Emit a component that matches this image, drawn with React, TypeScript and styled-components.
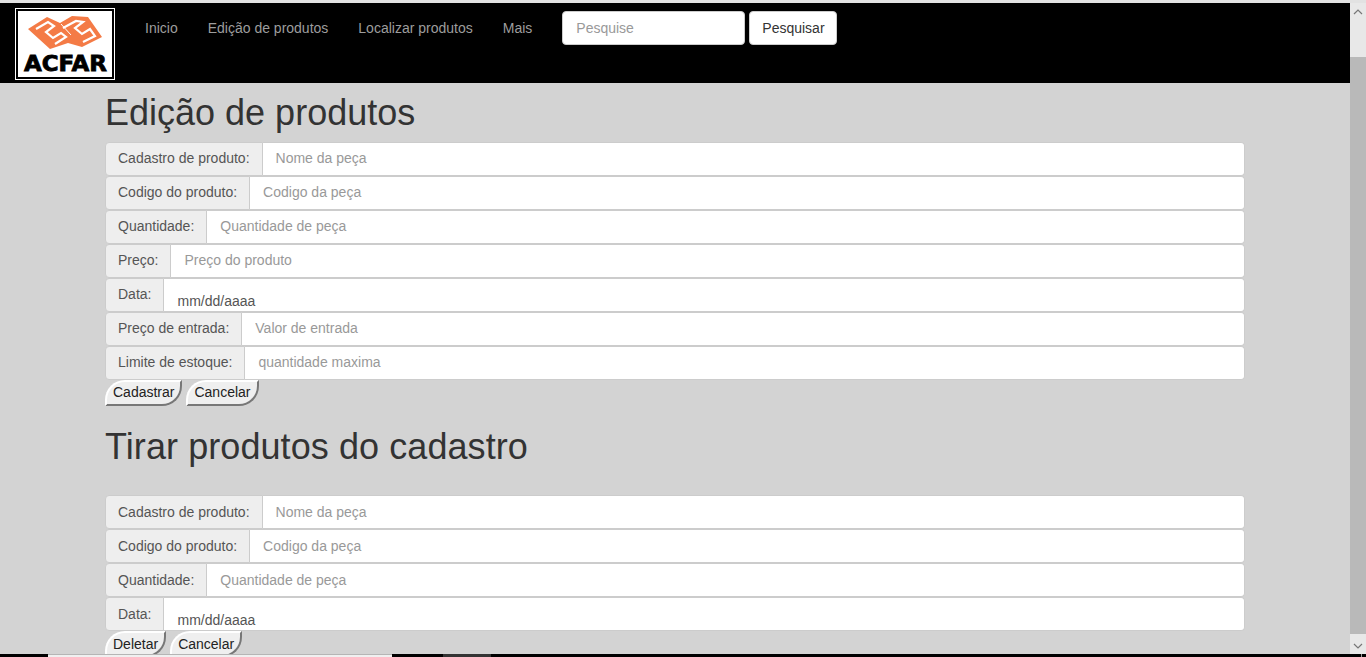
import * as React from "react";
import styled, { createGlobalStyle } from "styled-components";

const GlobalStyle = createGlobalStyle`
  html, body {
    margin: 0;
    height: 100%;
    overflow: hidden;
  }
  body {
    font-family: "Liberation Sans", Arial, sans-serif;
    font-size: 14px;
    line-height: 20px;
    color: #333;
    background: #000;
  }
  * {
    box-sizing: border-box;
  }
`;

interface Field {
  label: string;
  placeholder?: string;
  low?: boolean;
}

const editFields: Field[] = [
  { label: "Cadastro de produto:", placeholder: "Nome da peça" },
  { label: "Codigo do produto:", placeholder: "Codigo da peça" },
  { label: "Quantidade:", placeholder: "Quantidade de peça" },
  { label: "Preço:", placeholder: "Preço do produto" },
  { label: "Data:" },
  { label: "Preço de entrada:", placeholder: "Valor de entrada" },
  { label: "Limite de estoque:", placeholder: "quantidade maxima" },
];

const removeFields: Field[] = [
  { label: "Cadastro de produto:", placeholder: "Nome da peça" },
  { label: "Codigo do produto:", placeholder: "Codigo da peça" },
  { label: "Quantidade:", placeholder: "Quantidade de peça" },
  { label: "Data:" },
];

const navLinks = ["Inicio", "Edição de produtos", "Localizar produtos", "Mais"];

const Logo = () => (
  <LogoBox>
    <svg width="100" height="72" viewBox="0 0 100 72">
      <path d="M13 21 L32 9 L45 15 L57 8 L73 9 L87 29 L67 39 L53 35 L35 41 Z" fill="#f47b46" />
      <g fill="none" stroke="#fff" strokeWidth="2.2">
        <path d="M21 21 L33 14 L39 18 L31 24 L38 30 L46 25 L51 29 L40 36" />
        <path d="M48 20 L61 13 L68 14 L60 20 L67 26 L75 21 L80 28 L68 34" />
      </g>
      <path d="M46 16 L56 27" fill="none" stroke="#fff" strokeWidth="1" />
      <text x="9" y="63" fontFamily="DejaVu Sans" fontWeight="bold" fontSize="21" fill="#000" stroke="#000" strokeWidth="0.8" textLength="83" lengthAdjust="spacingAndGlyphs">
        ACFAR
      </text>
    </svg>
  </LogoBox>
);

const InputRow = ({ label, placeholder, low }: Field) => (
  <Group>
    <Addon $low={low}>{label}</Addon>
    {placeholder ? <TextInput $low={low} placeholder={placeholder} /> : <DateInput>mm/dd/aaaa</DateInput>}
  </Group>
);

const App = () => {
  return (
    <Window>
      <GlobalStyle />
      <TopLine />
      <Viewport>
        <Page>
          <Navbar>
            <Logo />
            <NavList>
              {navLinks.map((link) => (
                <NavLink key={link}>{link}</NavLink>
              ))}
            </NavList>
            <SearchForm>
              <SearchInput placeholder="Pesquise" />
              <SearchButton>Pesquisar</SearchButton>
            </SearchForm>
          </Navbar>
          <Container>
            <FirstTitle>Edição de produtos</FirstTitle>
            {editFields.map((field) => (
              <InputRow key={field.label} {...field} />
            ))}
            <Actions>
              <ActionButton>Cadastrar</ActionButton>
              <ActionButton>Cancelar</ActionButton>
            </Actions>
            <SecondTitle>Tirar produtos do cadastro</SecondTitle>
            {removeFields.map((field) => (
              <InputRow key={field.label} {...field} low />
            ))}
            <Actions>
              <ActionButton $low>Deletar</ActionButton>
              <ActionButton $low>Cancelar</ActionButton>
            </Actions>
          </Container>
        </Page>
        <Scrollbar>
          <ScrollArrow>
            <svg width="10" height="6" viewBox="0 0 10 6">
              <path d="M1 5 L5 1 L9 5" fill="none" stroke="#777" strokeWidth="1.2" />
            </svg>
          </ScrollArrow>
          <ScrollTrack />
          <ScrollArrow>
            <svg width="10" height="6" viewBox="0 0 10 6">
              <path d="M1 1 L5 5 L9 1" fill="none" stroke="#777" strokeWidth="1.2" />
            </svg>
          </ScrollArrow>
        </Scrollbar>
      </Viewport>
      <BottomStrip>
        <Strip $w={48} $c="#000" />
        <LightStrip $w={344} $c="#f0f0f0" />
        <Strip $w={51} $c="#000" />
        <Strip $w={48} $c="#333" />
        <Strip $w={870} $c="#000" />
        <Strip $w={1} $c="#999" />
        <Strip $w={4} $c="#000" />
      </BottomStrip>
    </Window>
  );
};

const Window = styled.div`
  display: flex;
  flex-direction: column;
  height: 657px;
  width: 1366px;
  overflow: hidden;
`;
const TopLine = styled.div`
  height: 3px;
  background: #e2e2e2;
  flex: none;
`;
const Viewport = styled.div`
  display: flex;
  height: 651px;
  flex: none;
`;
const Page = styled.div`
  width: 1350px;
  background: #d3d3d3;
  overflow: hidden;
`;
const Navbar = styled.nav`
  display: flex;
  align-items: flex-start;
  height: 80px;
  background: #000;
`;
const LogoBox = styled.div`
  width: 100px;
  height: 72px;
  margin: 5px 0 0 15px;
  background: #fff;
  outline: 2px solid #000;
  outline-offset: -3px;
  svg {
    display: block;
  }
`;
const NavList = styled.ul`
  display: flex;
  list-style: none;
  margin: 0;
  padding: 0 0 0 15px;
`;
const NavLink = styled.li`
  padding: 15px;
  color: #9d9d9d;
`;
const SearchForm = styled.form`
  display: flex;
  gap: 4px;
  margin: 8px 0 0 15px;
`;
const SearchInput = styled.input`
  width: 183px;
  height: 34px;
  padding: 6px 12px 6px 13px;
  border: 1px solid #ccc;
  border-radius: 4px;
  background: #fff;
  font: inherit;
  &::placeholder {
    color: #999;
    opacity: 1;
  }
`;
const SearchButton = styled.button`
  height: 34px;
  padding: 6px 11px 6px 12px;
  border: 1px solid #ccc;
  border-radius: 4px;
  background: #fff;
  color: #333;
  font: inherit;
`;
const Container = styled.main`
  width: 1140px;
  margin-left: 105px;
`;
const Title = styled.h1`
  font-size: 36px;
  font-weight: 500;
  line-height: 39.6px;
  margin: 0 0 9px;
  color: #333;
`;
const FirstTitle = styled(Title)`
  margin-top: 10px;
`;
const SecondTitle = styled(Title)`
  margin-top: 21px;
  margin-bottom: 29px;
  letter-spacing: 0.08px;
`;
const Group = styled.div`
  display: flex;
  height: 34px;
`;
const Addon = styled.span<{ $low?: boolean }>`
  flex: none;
  padding: ${(p) => (p.$low ? "6px" : "5px")} 12px 0;
  background: #eee;
  border: 1px solid #ccc;
  border-radius: 4px 0 0 4px;
  color: #555;
  white-space: nowrap;
`;
const TextInput = styled.input<{ $low?: boolean }>`
  flex: 1;
  min-width: 0;
  height: 100%;
  padding: ${(p) => (p.$low ? "6px 12px 6px 13px" : "5px 12px 7px 13px")};
  border: 1px solid #ccc;
  border-left: 0;
  border-radius: 0 4px 4px 0;
  background: #fff;
  font: inherit;
  color: #555;
  &::placeholder {
    color: #999;
    opacity: 1;
  }
`;
const DateInput = styled.div`
  flex: 1;
  padding: 12px 12px 0 13px;
  border: 1px solid #ccc;
  border-left: 0;
  border-radius: 0 4px 4px 0;
  background: #fff;
  color: #555;
`;
const Actions = styled.div`
  display: flex;
  gap: 4px;
`;
const ActionButton = styled.button<{ $low?: boolean }>`
  height: 26px;
  padding: ${(p) => (p.$low ? "1px 6px" : "0 6px 2px")};
  border: 2px solid;
  border-color: #fff #777 #777 #fff;
  border-radius: 20px 0;
  background: #efefef;
  color: #222;
  font: inherit;
  font-size: 14px;
`;
const Scrollbar = styled.div`
  width: 16px;
  display: flex;
  flex-direction: column;
  background: #b9b9b9;
`;
const ScrollArrow = styled.div`
  height: 17px;
  background: #e8e8e8;
  display: flex;
  align-items: center;
  justify-content: center;
`;
const ScrollTrack = styled.div`
  flex: 1;
  border-top: 37px solid #e8e8e8;
  border-bottom: 3px solid #e8e8e8;
`;
const BottomStrip = styled.div`
  display: flex;
  height: 3px;
  flex: none;
`;
const Strip = styled.div<{ $w: number; $c: string }>`
  width: ${(p) => p.$w}px;
  background: ${(p) => p.$c};
`;
const LightStrip = styled(Strip)`
  border-top: 1px solid #b5b5b5;
`;

export default App;
